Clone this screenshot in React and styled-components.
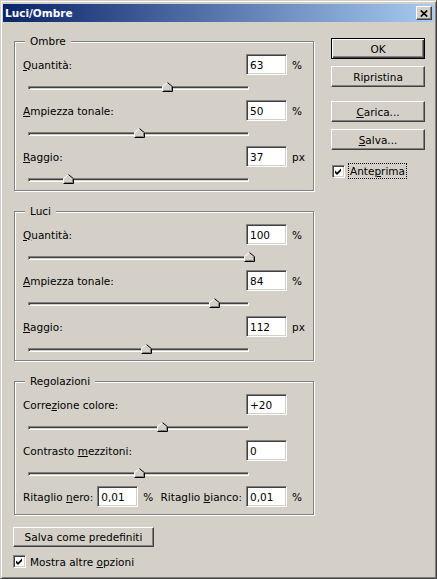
import styled, { createGlobalStyle } from "styled-components";

const GlobalStyle = createGlobalStyle`
  html, body {
    margin: 0;
    padding: 0;
    background: #D4D0C8;
  }
  body {
    font-family: "DejaVu Sans", Tahoma, sans-serif;
    font-size: 10.5px;
    color: #000;
  }
`;

const Window = styled.div`
  width: 437px;
  height: 579px;
  box-sizing: border-box;
  border: 1px solid;
  border-color: #D4D0C8 #404040 #404040 #D4D0C8;
  box-shadow: inset 1px 1px 0 #fff, inset -1px -1px 0 #808080;
  padding: 3px 2px 2px 2px;
  background: #D4D0C8;
  display: flex;
  flex-direction: column;
`;

const TitleBar = styled.div`
  height: 18px;
  flex: none;
  display: flex;
  align-items: center;
  justify-content: space-between;
  padding: 0 2px 0 2px;
  background: linear-gradient(to right, #0A246A, #A6CAF0);
`;

const Title = styled.span`
  color: #fff;
  font-weight: bold;
  font-size: 10.5px;
`;

const CloseButton = styled.div`
  width: 16px;
  height: 14px;
  box-sizing: border-box;
  border: 1px solid;
  border-color: #fff #404040 #404040 #fff;
  box-shadow: inset -1px -1px 0 #808080;
  background: #D4D0C8;
  display: flex;
  align-items: center;
  justify-content: center;
`;

const Body = styled.div`
  display: flex;
  flex: 1;
`;

const LeftColumn = styled.div`
  width: 301px;
  padding-left: 10px;
  display: flex;
  flex-direction: column;
`;

const RightColumn = styled.div`
  margin-left: 17px;
  padding-top: 16px;
  display: flex;
  flex-direction: column;
`;

const GroupBox = styled.div`
  position: relative;
  width: 300px;
  box-sizing: border-box;
  margin: 20px 0 0 1px;
  padding: 12px 0 ${(p) => p.$bottom}px 8px;
  border: 1px solid #808080;
  box-shadow: inset 1px 1px 0 #fff, 1px 1px 0 #fff;

  &:first-child {
    margin-top: 19px;
  }
`;

const Legend = styled.span`
  position: absolute;
  top: -7px;
  left: 10px;
  padding: 0 5px;
  line-height: 13px;
  background: #D4D0C8;
`;

const FieldRow = styled.div`
  & + & {
    margin-top: 10px;
  }
`;

const InputLine = styled.div`
  display: flex;
  align-items: center;
  height: 21px;
`;

const Label = styled.span`
  flex: ${(p) => (p.$grow ? 1 : "none")};
  white-space: nowrap;
`;

const Key = styled.span`
  text-decoration: underline;
`;

const TextBox = styled.input`
  width: 41px;
  height: 21px;
  box-sizing: border-box;
  margin: 0 0 0 ${(p) => p.$gap || 0}px;
  padding: 0 0 0 3px;
  border: 1px solid;
  border-color: #808080 #fff #fff #808080;
  box-shadow: inset 1px 1px 0 #404040, inset -1px -1px 0 #D4D0C8;
  background: #fff;
  font-family: inherit;
  font-size: 10.5px;
  color: #000;
  outline: none;
`;

const Unit = styled.span`
  width: ${(p) => (p.$wide ? "21px" : "auto")};
  margin-left: 5px;
`;

const SliderArea = styled.div`
  height: 15px;
  display: flex;
  align-items: flex-end;
  padding-left: 5px;
`;

const Track = styled.div`
  position: relative;
  width: 221px;
  height: 4px;
  box-sizing: border-box;
  border: 1px solid;
  border-color: #808080 #fff #fff #808080;
  box-shadow: inset 1px 1px 0 #404040;
  background: #D4D0C8;
`;

const Thumb = styled.svg`
  position: absolute;
  top: -5px;
  display: block;
`;

const RightGroup = styled.div`
  margin-left: auto;
  display: flex;
  align-items: center;
`;

const Button = styled.div`
  width: ${(p) => p.$width}px;
  height: ${(p) => p.$height}px;
  box-sizing: border-box;
  margin-top: ${(p) => p.$top || 0}px;
  border: 1px solid;
  border-color: ${(p) => (p.$default ? "#000" : "#fff #404040 #404040 #fff")};
  box-shadow: ${(p) =>
    p.$default
      ? "inset 1px 1px 0 #fff, inset -1px -1px 0 #404040, inset -2px -2px 0 #808080"
      : "inset -1px -1px 0 #808080"};
  background: #D4D0C8;
  display: flex;
  align-items: center;
  justify-content: center;
  white-space: nowrap;
`;

const CheckRow = styled.div`
  display: flex;
  align-items: center;
  margin-top: ${(p) => p.$top}px;
  margin-left: ${(p) => p.$left || 0}px;
`;

const CheckBox = styled.span`
  width: 13px;
  height: 13px;
  box-sizing: border-box;
  border: 1px solid;
  border-color: #808080 #fff #fff #808080;
  box-shadow: inset 1px 1px 0 #404040, inset -1px -1px 0 #D4D0C8;
  background: #fff;
  flex: none;

  svg {
    display: block;
    margin: 1px;
  }
`;

const CheckLabel = styled.span`
  margin-left: ${(p) => (p.$focus ? 3 : 4)}px;
  padding: ${(p) => (p.$focus ? "1px 1px" : "0")};
  border: ${(p) => (p.$focus ? "1px dotted #000" : "none")};
  line-height: 12px;
`;

const ombre = [
  { id: "q", label: <><Key>Q</Key>uantità:</>, value: "63", unit: "%", pos: 0.63 },
  { id: "a", label: <><Key>A</Key>mpiezza tonale:</>, value: "50", unit: "%", pos: 0.5 },
  { id: "r", label: <><Key>R</Key>aggio:</>, value: "37", unit: "px", pos: 0.181 },
];

const luci = [
  { id: "q", label: <><Key>Q</Key>uantità:</>, value: "100", unit: "%", pos: 1 },
  { id: "a", label: <><Key>A</Key>mpiezza tonale:</>, value: "84", unit: "%", pos: 0.84 },
  { id: "r", label: <><Key>R</Key>aggio:</>, value: "112", unit: "px", pos: 0.534 },
];

const regolazioni = [
  { id: "c", label: <>Corre<Key>z</Key>ione colore:</>, value: "+20", unit: "", pos: 0.606 },
  { id: "m", label: <>Contrasto <Key>m</Key>ezzitoni:</>, value: "0", unit: "", pos: 0.5 },
];

const SliderThumb = ({ pos }) => (
  <Thumb width="11" height="10" viewBox="0 0 11 10" style={{ left: `${pos * 221 - 6}px` }}>
    <polygon points="0,10 0,4.5 5.5,0 11,4.5 11,10" fill="#D4D0C8" />
    <polyline points="0.5,9.5 0.5,4.7 5.5,0.6" fill="none" stroke="#fff" strokeWidth="1" />
    <polyline points="5.5,0.6 10.5,4.7 10.5,9.5 0.5,9.5" fill="none" stroke="#000" strokeWidth="1" />
    <polyline points="9.5,5 9.5,8.5 1.5,8.5" fill="none" stroke="#808080" strokeWidth="1" />
  </Thumb>
);

const SliderField = ({ field }) => (
  <FieldRow>
    <InputLine>
      <Label $grow>{field.label}</Label>
      <TextBox readOnly value={field.value} />
      <Unit $wide>{field.unit}</Unit>
    </InputLine>
    <SliderArea>
      <Track>
        <SliderThumb pos={field.pos} />
      </Track>
    </SliderArea>
  </FieldRow>
);

const Check = () => (
  <CheckBox>
    <svg width="9" height="9" viewBox="0 0 9 9">
      <path d="M1 3.5 L3 5.5 L7 1.5 L7 4 L3 8 L1 6 Z" fill="#000" />
    </svg>
  </CheckBox>
);

const App = () => (
  <Window>
    <GlobalStyle />
    <TitleBar>
      <Title>Luci/Ombre</Title>
      <CloseButton>
        <svg width="8" height="7" viewBox="0 0 8 7">
          <path d="M0.8 0.5 L7.2 6.5 M7.2 0.5 L0.8 6.5" stroke="#000" strokeWidth="1.7" />
        </svg>
      </CloseButton>
    </TitleBar>

    <Body>
      <LeftColumn>
        <GroupBox $bottom={8}>
          <Legend>Ombre</Legend>
          {ombre.map((f) => (
            <SliderField key={f.id} field={f} />
          ))}
        </GroupBox>

        <GroupBox $bottom={8}>
          <Legend>Luci</Legend>
          {luci.map((f) => (
            <SliderField key={f.id} field={f} />
          ))}
        </GroupBox>

        <GroupBox $bottom={7}>
          <Legend>Regolazioni</Legend>
          {regolazioni.map((f) => (
            <SliderField key={f.id} field={f} />
          ))}
          <FieldRow>
            <InputLine>
              <Label>Ritaglio <Key>n</Key>ero:</Label>
              <TextBox readOnly value="0,01" $gap={4} />
              <Unit>%</Unit>
              <RightGroup>
                <Label>Ritaglio <Key>b</Key>ianco:</Label>
                <TextBox readOnly value="0,01" $gap={4} />
                <Unit $wide>%</Unit>
              </RightGroup>
            </InputLine>
          </FieldRow>
        </GroupBox>

        <Button $width={141} $height={20} $top={12}>Salva come predefiniti</Button>
        <CheckRow $top={8}>
          <Check />
          <CheckLabel>Mostra altre <Key>o</Key>pzioni</CheckLabel>
        </CheckRow>
      </LeftColumn>

      <RightColumn>
        <Button $width={94} $height={21} $default>OK</Button>
        <Button $width={94} $height={21} $top={7}>Ripristina</Button>
        <Button $width={94} $height={21} $top={14}><span><Key>C</Key>arica...</span></Button>
        <Button $width={94} $height={21} $top={7}><span><Key>S</Key>alva...</span></Button>
        <CheckRow $top={13} $left={1}>
          <Check />
          <CheckLabel $focus>Ante<Key>p</Key>rima</CheckLabel>
        </CheckRow>
      </RightColumn>
    </Body>
  </Window>
);

export default App;
